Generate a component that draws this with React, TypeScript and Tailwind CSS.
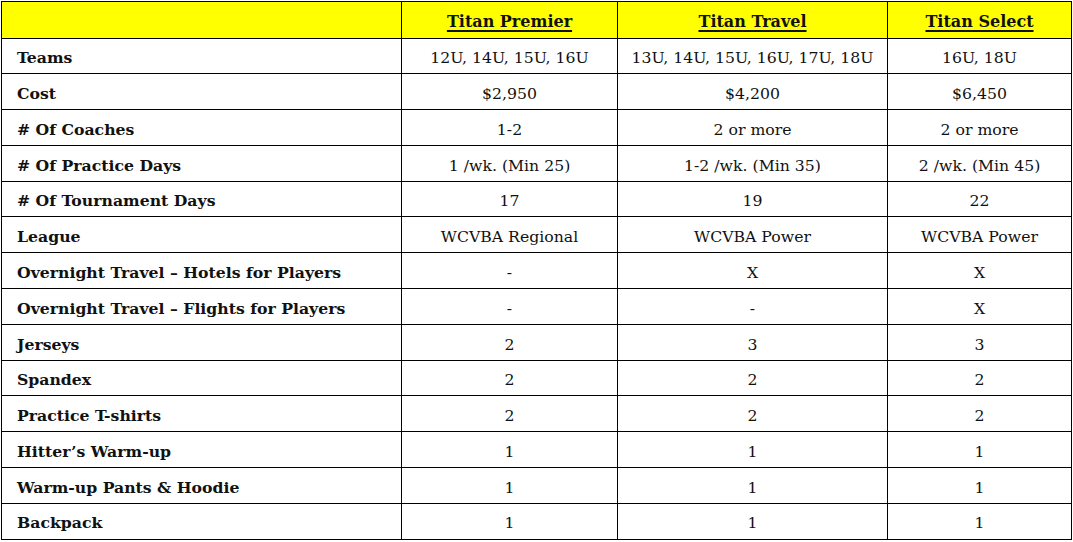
const headers = ["Titan Premier", "Titan Travel", "Titan Select"]

const rows: [string, string, string, string][] = [
  ["Teams", "12U, 14U, 15U, 16U", "13U, 14U, 15U, 16U, 17U, 18U", "16U, 18U"],
  ["Cost", "$2,950", "$4,200", "$6,450"],
  ["# Of Coaches", "1-2", "2 or more", "2 or more"],
  ["# Of Practice Days", "1 /wk. (Min 25)", "1-2 /wk. (Min 35)", "2 /wk. (Min 45)"],
  ["# Of Tournament Days", "17", "19", "22"],
  ["League", "WCVBA Regional", "WCVBA Power", "WCVBA Power"],
  ["Overnight Travel \u2013 Hotels for Players", "-", "X", "X"],
  ["Overnight Travel \u2013 Flights for Players", "-", "-", "X"],
  ["Jerseys", "2", "3", "3"],
  ["Spandex", "2", "2", "2"],
  ["Practice T-shirts", "2", "2", "2"],
  ["Hitter\u2019s Warm-up", "1", "1", "1"],
  ["Warm-up Pants & Hoodie", "1", "1", "1"],
  ["Backpack", "1", "1", "1"],
]

const cell = "flex items-center justify-center border-r border-b border-black pt-[4px]"

export default function App() {
  return (
    <div className="min-h-screen bg-white pt-px pl-px font-['DejaVu_Serif',serif] text-[15.7px] text-[#111]">
      <div className="grid w-[1071px] grid-cols-[400px_216px_270px_184px] border-t border-l border-black">
        <div className={`${cell} h-[36.5px] bg-[#ffff00]`} />
        {headers.map((h) => (
          <div
            key={h}
            className={`${cell} h-[36.5px] bg-[#ffff00] text-[16px] font-bold underline decoration-[1.5px] underline-offset-[3px]`}
          >
            {h}
          </div>
        ))}
        {rows.map((r) => (
          <div key={r[0]} className="contents">
            <div className={`${cell} h-[35.8px] justify-start! pl-[15px] font-bold`}>{r[0]}</div>
            <div className={`${cell} h-[35.8px]`}>{r[1]}</div>
            <div className={`${cell} h-[35.8px]`}>{r[2]}</div>
            <div className={`${cell} h-[35.8px]`}>{r[3]}</div>
          </div>
        ))}
      </div>
    </div>
  )
}
